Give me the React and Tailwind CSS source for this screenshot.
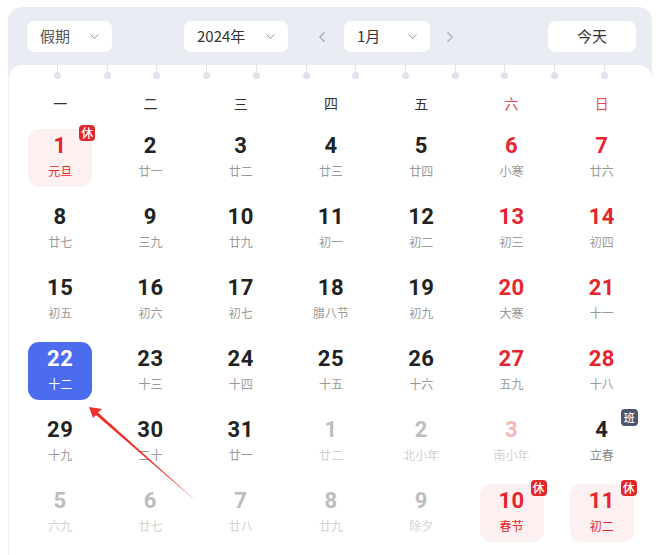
import React from "react";
import { ChevronDown, ChevronLeft, ChevronRight } from "lucide-react";

const weekdays = [
    { label: "一" },
    { label: "二" },
    { label: "三" },
    { label: "四" },
    { label: "五" },
    { label: "六", weekend: true },
    { label: "日", weekend: true },
];

// type: normal | weekend | other | otherWeekend | holiday | selected | work
const days = [
    { d: 1, l: "元旦", type: "holiday" },
    { d: 2, l: "廿一" },
    { d: 3, l: "廿二" },
    { d: 4, l: "廿三" },
    { d: 5, l: "廿四" },
    { d: 6, l: "小寒", type: "weekend" },
    { d: 7, l: "廿六", type: "weekend" },
    { d: 8, l: "廿七" },
    { d: 9, l: "三九" },
    { d: 10, l: "廿九" },
    { d: 11, l: "初一" },
    { d: 12, l: "初二" },
    { d: 13, l: "初三", type: "weekend" },
    { d: 14, l: "初四", type: "weekend" },
    { d: 15, l: "初五" },
    { d: 16, l: "初六" },
    { d: 17, l: "初七" },
    { d: 18, l: "腊八节" },
    { d: 19, l: "初九" },
    { d: 20, l: "大寒", type: "weekend" },
    { d: 21, l: "十一", type: "weekend" },
    { d: 22, l: "十二", type: "selected" },
    { d: 23, l: "十三" },
    { d: 24, l: "十四" },
    { d: 25, l: "十五" },
    { d: 26, l: "十六" },
    { d: 27, l: "五九", type: "weekend" },
    { d: 28, l: "十八", type: "weekend" },
    { d: 29, l: "十九" },
    { d: 30, l: "二十" },
    { d: 31, l: "廿一" },
    { d: 1, l: "廿二", type: "other" },
    { d: 2, l: "北小年", type: "other" },
    { d: 3, l: "南小年", type: "otherWeekend" },
    { d: 4, l: "立春", type: "work" },
    { d: 5, l: "六九", type: "other" },
    { d: 6, l: "廿七", type: "other" },
    { d: 7, l: "廿八", type: "other" },
    { d: 8, l: "廿九", type: "other" },
    { d: 9, l: "除夕", type: "other" },
    { d: 10, l: "春节", type: "holiday" },
    { d: 11, l: "初二", type: "holiday" },
];

const styles = {
    normal: { box: "", num: "text-[#222]", lunar: "text-[#999]" },
    weekend: { box: "", num: "text-[#e5262d]", lunar: "text-[#999]" },
    other: { box: "", num: "text-[#bdbdbd]", lunar: "text-[#d2d2d2]" },
    otherWeekend: { box: "", num: "text-[#f4b6b8]", lunar: "text-[#d2d2d2]" },
    holiday: { box: "bg-[#fdf0f0]", num: "text-[#e5262d]", lunar: "text-[#e5262d]" },
    selected: { box: "bg-[#4b6cef]", num: "text-white", lunar: "text-white" },
    work: { box: "", num: "text-[#222]", lunar: "text-[#888]" },
};

function Select({ label, width, dark }) {
    return (
        <div
            className={`h-[31px] ${width} bg-white rounded-[7px] flex items-center justify-between pl-[13px] pr-[10px]`}
        >
            <span className={`text-[15px] ${dark ? "text-[#333]" : "text-[#555]"}`}>{label}</span>
            <ChevronDown size={15} strokeWidth={1.5} className="text-[#888]" />
        </div>
    );
}

function DayCell({ day }) {
    const s = styles[day.type || "normal"];
    return (
        <div className="flex justify-center">
            <div className={`relative w-[64px] h-[58px] rounded-[11px] flex flex-col items-center pt-[4px] ${s.box}`}>
                <span
                    className={`text-[22px] leading-[26px] font-bold tracking-[0.5px] ${s.num}`}
                    style={{ fontFamily: "Roboto, 'Noto Sans', sans-serif" }}
                >
                    {day.d}
                </span>
                <span className={`mt-[4px] text-[12px] leading-[16px] ${s.lunar}`}>{day.l}</span>
                {day.type === "holiday" && (
                    <span className="absolute -top-[4px] -right-[3px] w-[16px] h-[16px] rounded-[4px] bg-[#e3262c] text-white text-[12px] leading-[16px] text-center font-medium">
                        休
                    </span>
                )}
                {day.type === "work" && (
                    <span className="absolute -top-[4px] -right-[4px] w-[17px] h-[17px] rounded-[4px] bg-[#4a5571] text-white text-[11px] leading-[17px] text-center font-medium">
                        班
                    </span>
                )}
            </div>
        </div>
    );
}

export default function App() {
    return (
        <div
            className="relative w-[660px] h-[555px] overflow-hidden bg-white"
            style={{ fontFamily: "'Noto Sans CJK SC', 'Noto Sans', sans-serif" }}
        >
            <div className="mx-[8px] mt-[7px] rounded-[14px] bg-[#e9ecf3] pt-[14px]">
                <div className="flex items-center pl-[19px] pr-[16px]">
                    <Select label="假期" width="w-[85px]" />
                    <div className="ml-[72px]">
                        <Select label="2024年" width="w-[104px]" dark />
                    </div>
                    <ChevronLeft size={18} strokeWidth={1.5} className="ml-[25px] text-[#aab]" />
                    <div className="ml-[13px]">
                        <Select label="1月" width="w-[86px]" dark />
                    </div>
                    <ChevronRight size={18} strokeWidth={1.5} className="ml-[11px] text-[#aab]" />
                    <div className="ml-auto w-[88px] h-[31px] bg-white rounded-[8px] flex items-center justify-center text-[15px] text-[#333]">
                        今天
                    </div>
                </div>

                <div className="mt-[13px] bg-white rounded-t-[14px] border-l border-[#eef0f4] h-[520px] pl-[6px] pr-[5px]">
                    <div className="flex justify-between px-[39px] h-[14px]">
                        {Array.from({ length: 12 }).map((_, i) => (
                            <div key={i} className="flex flex-col items-center w-[7px]">
                                <div className="w-px h-[7px] bg-[#dfe3ea]"></div>
                                <div className="w-[7px] h-[7px] rounded-full bg-[#dfe3ea]"></div>
                            </div>
                        ))}
                    </div>

                    <div className="grid grid-cols-7 mt-[4px] h-[40px] items-center">
                        {weekdays.map((w) => (
                            <div
                                key={w.label}
                                className={`text-center text-[14px] ${w.weekend ? "text-[#e5464c]" : "text-[#333]"}`}
                            >
                                {w.label}
                            </div>
                        ))}
                    </div>

                    <div className="grid grid-cols-7 gap-y-[13px] mt-[6px]">
                        {days.map((day, i) => (
                            <DayCell key={i} day={day} />
                        ))}
                    </div>
                </div>
            </div>

            <svg className="absolute left-0 top-0 pointer-events-none" width="660" height="555">
                <polygon points="89,407 102,409 98,412.5 197,502 96,415 93,418" fill="#f0302a" />
            </svg>
        </div>
    );
}
